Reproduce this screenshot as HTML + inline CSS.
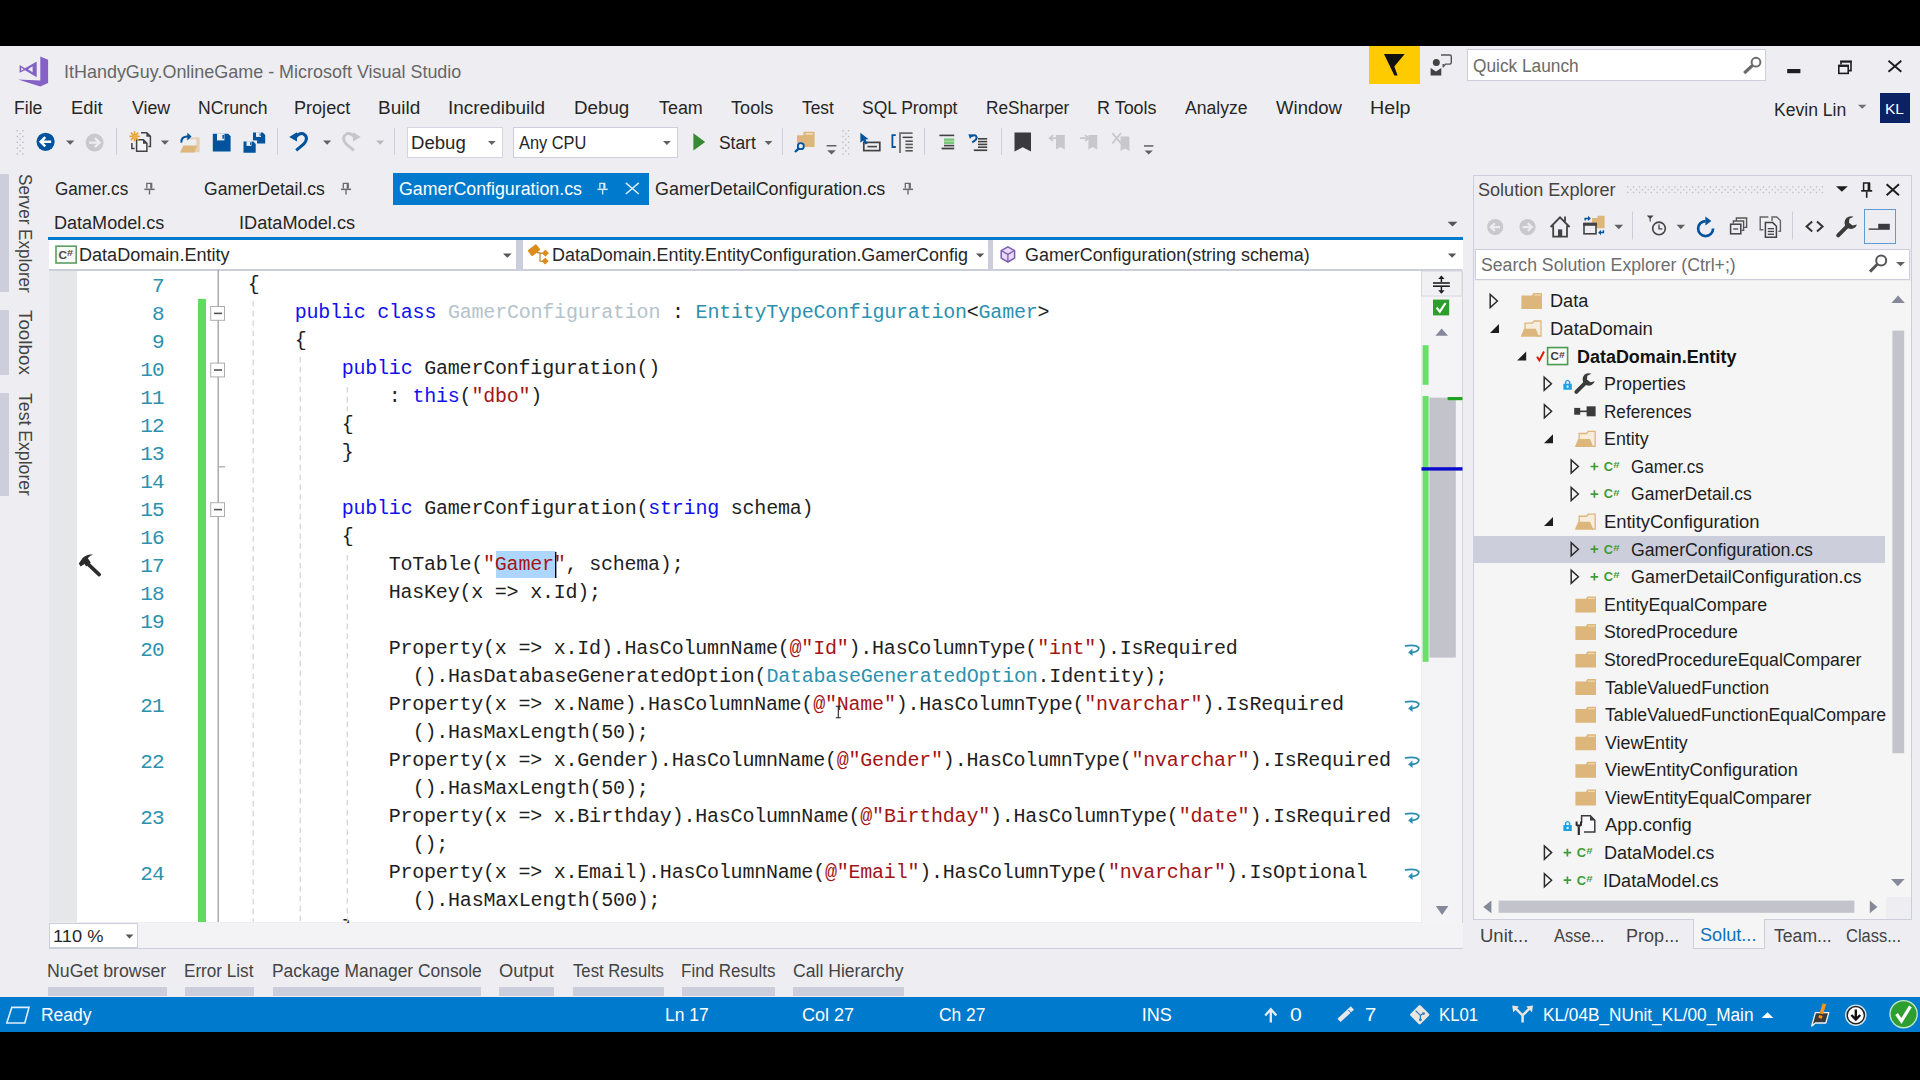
<!DOCTYPE html>
<html><head><meta charset="utf-8"><title>ItHandyGuy.OnlineGame - Microsoft Visual Studio</title>
<style>
html,body{margin:0;padding:0;background:#000;}
body{width:1920px;height:1080px;position:relative;overflow:hidden;font-family:"Liberation Sans",sans-serif;}
#app{position:absolute;left:0;top:0;width:1920px;height:1080px;overflow:hidden;}
#app div,#app svg{position:absolute;}
#app svg{overflow:visible;}
.t{white-space:pre;}
</style></head>
<body><div id="app">
<div style="left:0px;top:46px;width:1920px;height:986px;background:#EEEEF2;"></div>
<div class="t" style="left:64.31px;top:63.26px;font-family:'Liberation Sans', sans-serif;font-size:18.6px;line-height:18.6px;color:#666;font-weight:400;transform:scaleX(0.9652);transform-origin:0 0;">ItHandyGuy.OnlineGame - Microsoft Visual Studio</div>
<div class="t" style="left:13.83px;top:99.06px;font-family:'Liberation Sans', sans-serif;font-size:18px;line-height:18px;color:#262626;font-weight:400;transform:scaleX(0.9794);transform-origin:0 0;">File</div>
<div class="t" style="left:71.17px;top:99.06px;font-family:'Liberation Sans', sans-serif;font-size:18px;line-height:18px;color:#262626;font-weight:400;transform:scaleX(1.0169);transform-origin:0 0;">Edit</div>
<div class="t" style="left:132.05px;top:99.06px;font-family:'Liberation Sans', sans-serif;font-size:18px;line-height:18px;color:#262626;font-weight:400;transform:scaleX(0.9870);transform-origin:0 0;">View</div>
<div class="t" style="left:197.83px;top:99.06px;font-family:'Liberation Sans', sans-serif;font-size:18px;line-height:18px;color:#262626;font-weight:400;transform:scaleX(0.9773);transform-origin:0 0;">NCrunch</div>
<div class="t" style="left:293.79px;top:99.06px;font-family:'Liberation Sans', sans-serif;font-size:18px;line-height:18px;color:#262626;font-weight:400;transform:scaleX(1.0037);transform-origin:0 0;">Project</div>
<div class="t" style="left:378.42px;top:99.06px;font-family:'Liberation Sans', sans-serif;font-size:18px;line-height:18px;color:#262626;font-weight:400;transform:scaleX(1.0550);transform-origin:0 0;">Build</div>
<div class="t" style="left:448.16px;top:99.06px;font-family:'Liberation Sans', sans-serif;font-size:18px;line-height:18px;color:#262626;font-weight:400;transform:scaleX(1.0532);transform-origin:0 0;">Incredibuild</div>
<div class="t" style="left:574.14px;top:99.06px;font-family:'Liberation Sans', sans-serif;font-size:18px;line-height:18px;color:#262626;font-weight:400;transform:scaleX(1.0416);transform-origin:0 0;">Debug</div>
<div class="t" style="left:658.80px;top:99.06px;font-family:'Liberation Sans', sans-serif;font-size:18px;line-height:18px;color:#262626;font-weight:400;transform:scaleX(0.9941);transform-origin:0 0;">Team</div>
<div class="t" style="left:731.20px;top:99.06px;font-family:'Liberation Sans', sans-serif;font-size:18px;line-height:18px;color:#262626;font-weight:400;transform:scaleX(1.0061);transform-origin:0 0;">Tools</div>
<div class="t" style="left:802.22px;top:99.06px;font-family:'Liberation Sans', sans-serif;font-size:18px;line-height:18px;color:#262626;font-weight:400;transform:scaleX(0.9631);transform-origin:0 0;">Test</div>
<div class="t" style="left:861.97px;top:99.06px;font-family:'Liberation Sans', sans-serif;font-size:18px;line-height:18px;color:#262626;font-weight:400;transform:scaleX(0.9703);transform-origin:0 0;">SQL Prompt</div>
<div class="t" style="left:986.26px;top:99.06px;font-family:'Liberation Sans', sans-serif;font-size:18px;line-height:18px;color:#262626;font-weight:400;transform:scaleX(0.9572);transform-origin:0 0;">ReSharper</div>
<div class="t" style="left:1096.80px;top:99.06px;font-family:'Liberation Sans', sans-serif;font-size:18px;line-height:18px;color:#262626;font-weight:400;transform:scaleX(0.9983);transform-origin:0 0;">R Tools</div>
<div class="t" style="left:1185.00px;top:99.06px;font-family:'Liberation Sans', sans-serif;font-size:18px;line-height:18px;color:#262626;font-weight:400;transform:scaleX(0.9755);transform-origin:0 0;">Analyze</div>
<div class="t" style="left:1275.54px;top:99.06px;font-family:'Liberation Sans', sans-serif;font-size:18px;line-height:18px;color:#262626;font-weight:400;transform:scaleX(1.0306);transform-origin:0 0;">Window</div>
<div class="t" style="left:1370.36px;top:99.06px;font-family:'Liberation Sans', sans-serif;font-size:18px;line-height:18px;color:#262626;font-weight:400;transform:scaleX(1.0935);transform-origin:0 0;">Help</div>
<div style="left:1369px;top:46px;width:50.5px;height:38px;background:#FDCB00;"></div>
<div style="left:1466.5px;top:48.5px;width:299.5px;height:32.5px;background:#fff;border:1px solid #CCCEDB;box-sizing:border-box;"></div>
<div class="t" style="left:1473.28px;top:57.26px;font-family:'Liberation Sans', sans-serif;font-size:18px;line-height:18px;color:#6a6a6a;font-weight:400;transform:scaleX(0.9607);transform-origin:0 0;">Quick Launch</div>
<div class="t" style="left:1774.14px;top:101.26px;font-family:'Liberation Sans', sans-serif;font-size:18px;line-height:18px;color:#262626;font-weight:400;transform:scaleX(0.9762);transform-origin:0 0;">Kevin Lin</div>
<div style="left:1879.5px;top:92.5px;width:30.5px;height:30px;background:#0B2265;"></div>
<div class="t" style="left:1884.71px;top:100.80px;font-family:'Liberation Sans', sans-serif;font-size:15px;line-height:15px;color:#fff;font-weight:400;transform:scaleX(1.0303);transform-origin:0 0;">KL</div>
<div style="left:406.5px;top:126.5px;width:96px;height:31.5px;background:#fff;border:1px solid #D4D5E0;box-sizing:border-box;"></div>
<div style="left:512.5px;top:126.5px;width:165px;height:31.5px;background:#fff;border:1px solid #CCCEDB;box-sizing:border-box;"></div>
<div class="t" style="left:410.95px;top:133.96px;font-family:'Liberation Sans', sans-serif;font-size:18px;line-height:18px;color:#262626;font-weight:400;transform:scaleX(1.0317);transform-origin:0 0;">Debug</div>
<div class="t" style="left:518.80px;top:133.96px;font-family:'Liberation Sans', sans-serif;font-size:18px;line-height:18px;color:#262626;font-weight:400;transform:scaleX(0.9103);transform-origin:0 0;">Any CPU</div>
<div class="t" style="left:718.88px;top:133.96px;font-family:'Liberation Sans', sans-serif;font-size:18px;line-height:18px;color:#262626;font-weight:400;transform:scaleX(0.9664);transform-origin:0 0;">Start</div>
<div style="left:116.3px;top:128px;width:1px;height:27px;background:#CCCEDB;"></div>
<div style="left:276.7px;top:128px;width:1px;height:27px;background:#CCCEDB;"></div>
<div style="left:393.8px;top:128px;width:1px;height:27px;background:#CCCEDB;"></div>
<div style="left:782px;top:128px;width:1px;height:27px;background:#CCCEDB;"></div>
<div style="left:924.4px;top:128px;width:1px;height:27px;background:#CCCEDB;"></div>
<div style="left:1001px;top:128px;width:1px;height:27px;background:#CCCEDB;"></div>
<div style="left:0px;top:173.8px;width:9px;height:118.59999999999997px;background:#CCCEDB;"></div>
<div style="left:0px;top:310.3px;width:9px;height:64.69999999999999px;background:#CCCEDB;"></div>
<div style="left:0px;top:393px;width:9px;height:102.80000000000001px;background:#CCCEDB;"></div>
<div style="left:393.3px;top:173px;width:255.7px;height:32.3px;background:#007ACC;"></div>
<div class="t" style="left:54.55px;top:179.76px;font-family:'Liberation Sans', sans-serif;font-size:18px;line-height:18px;color:#262626;font-weight:400;transform:scaleX(0.9502);transform-origin:0 0;">Gamer.cs</div>
<div class="t" style="left:203.53px;top:179.76px;font-family:'Liberation Sans', sans-serif;font-size:18px;line-height:18px;color:#262626;font-weight:400;transform:scaleX(0.9735);transform-origin:0 0;">GamerDetail.cs</div>
<div class="t" style="left:398.61px;top:179.76px;font-family:'Liberation Sans', sans-serif;font-size:18px;line-height:18px;color:#fff;font-weight:400;transform:scaleX(0.9886);transform-origin:0 0;">GamerConfiguration.cs</div>
<div class="t" style="left:655.40px;top:179.76px;font-family:'Liberation Sans', sans-serif;font-size:18px;line-height:18px;color:#262626;font-weight:400;transform:scaleX(0.9961);transform-origin:0 0;">GamerDetailConfiguration.cs</div>
<div class="t" style="left:54.00px;top:213.51px;font-family:'Liberation Sans', sans-serif;font-size:18px;line-height:18px;color:#262626;font-weight:400;transform:scaleX(1.0023);transform-origin:0 0;">DataModel.cs</div>
<div class="t" style="left:239.48px;top:213.51px;font-family:'Liberation Sans', sans-serif;font-size:18px;line-height:18px;color:#262626;font-weight:400;transform:scaleX(1.0089);transform-origin:0 0;">IDataModel.cs</div>
<div style="left:48px;top:237px;width:1415px;height:2.5px;background:#007ACC;"></div>
<div style="left:49px;top:239.5px;width:1414px;height:30.5px;background:#fff;"></div>
<div style="left:516px;top:240px;width:6.5px;height:29px;background:#CCCEDB;"></div>
<div style="left:988px;top:240px;width:5px;height:29px;background:#CCCEDB;"></div>
<div class="t" style="left:79.49px;top:245.76px;font-family:'Liberation Sans', sans-serif;font-size:18px;line-height:18px;color:#262626;font-weight:400;transform:scaleX(1.0034);transform-origin:0 0;">DataDomain.Entity</div>
<div class="t" style="left:552.21px;top:245.76px;font-family:'Liberation Sans', sans-serif;font-size:18px;line-height:18px;color:#262626;font-weight:400;transform:scaleX(0.9953);transform-origin:0 0;">DataDomain.Entity.EntityConfiguration.GamerConfig</div>
<div class="t" style="left:1025.01px;top:245.76px;font-family:'Liberation Sans', sans-serif;font-size:18px;line-height:18px;color:#262626;font-weight:400;transform:scaleX(0.9947);transform-origin:0 0;">GamerConfiguration(string schema)</div>
<div style="left:49px;top:269.5px;width:1414px;height:1px;background:#CCCEDB;"></div>
<div style="left:49px;top:270px;width:1372px;height:652px;background:#fff;"></div>
<div style="left:49px;top:270px;width:28px;height:652px;background:#E6E7E8;"></div>
<div style="left:198px;top:299px;width:8px;height:623px;background:#5FDB5F;"></div>
<div style="left:1421.5px;top:270px;width:41px;height:653px;background:#F4F4F7;"></div>
<div style="left:1462.3px;top:270px;width:1px;height:678px;background:#D3D4E0;"></div>
<div style="left:49px;top:269.4px;width:1413px;height:1.8px;background:#CCCEDB;"></div>
<div style="left:495.5px;top:551px;width:60px;height:27px;background:#ADD6FF;"></div>
<div class="t" style="left:247.70px;top:274.97px;font-family:'Liberation Mono', monospace;font-size:20px;line-height:20px;letter-spacing:-0.212px"><span style="color:#1e1e1e">{</span></div>
<div class="t" style="left:152.11px;top:275.60px;font-family:'Liberation Mono', monospace;font-size:21px;line-height:21px;letter-spacing:-0.812px"><span style="color:#2B91AF">7</span></div>
<div class="t" style="left:294.70px;top:302.97px;font-family:'Liberation Mono', monospace;font-size:20px;line-height:20px;letter-spacing:-0.212px"><span style="color:#1010F0">public</span><span style="color:#1e1e1e"> </span><span style="color:#1010F0">class</span><span style="color:#1e1e1e"> </span><span style="color:#B4C3CC">GamerConfiguration</span><span style="color:#1e1e1e"> : </span><span style="color:#2B91AF">EntityTypeConfiguration</span><span style="color:#1e1e1e">&lt;</span><span style="color:#2B91AF">Gamer</span><span style="color:#1e1e1e">&gt;</span></div>
<div class="t" style="left:152.11px;top:303.60px;font-family:'Liberation Mono', monospace;font-size:21px;line-height:21px;letter-spacing:-0.812px"><span style="color:#2B91AF">8</span></div>
<div class="t" style="left:294.70px;top:330.97px;font-family:'Liberation Mono', monospace;font-size:20px;line-height:20px;letter-spacing:-0.212px"><span style="color:#1e1e1e">{</span></div>
<div class="t" style="left:152.11px;top:331.60px;font-family:'Liberation Mono', monospace;font-size:21px;line-height:21px;letter-spacing:-0.812px"><span style="color:#2B91AF">9</span></div>
<div class="t" style="left:341.70px;top:358.97px;font-family:'Liberation Mono', monospace;font-size:20px;line-height:20px;letter-spacing:-0.212px"><span style="color:#1010F0">public</span><span style="color:#1e1e1e"> GamerConfiguration()</span></div>
<div class="t" style="left:140.32px;top:359.60px;font-family:'Liberation Mono', monospace;font-size:21px;line-height:21px;letter-spacing:-0.812px"><span style="color:#2B91AF">10</span></div>
<div class="t" style="left:341.70px;top:386.97px;font-family:'Liberation Mono', monospace;font-size:20px;line-height:20px;letter-spacing:-0.212px"><span style="color:#1e1e1e">    : </span><span style="color:#1010F0">this</span><span style="color:#1e1e1e">(</span><span style="color:#A31515">&quot;dbo&quot;</span><span style="color:#1e1e1e">)</span></div>
<div class="t" style="left:140.32px;top:387.60px;font-family:'Liberation Mono', monospace;font-size:21px;line-height:21px;letter-spacing:-0.812px"><span style="color:#2B91AF">11</span></div>
<div class="t" style="left:341.70px;top:414.97px;font-family:'Liberation Mono', monospace;font-size:20px;line-height:20px;letter-spacing:-0.212px"><span style="color:#1e1e1e">{</span></div>
<div class="t" style="left:140.32px;top:415.60px;font-family:'Liberation Mono', monospace;font-size:21px;line-height:21px;letter-spacing:-0.812px"><span style="color:#2B91AF">12</span></div>
<div class="t" style="left:341.70px;top:442.97px;font-family:'Liberation Mono', monospace;font-size:20px;line-height:20px;letter-spacing:-0.212px"><span style="color:#1e1e1e">}</span></div>
<div class="t" style="left:140.32px;top:443.60px;font-family:'Liberation Mono', monospace;font-size:21px;line-height:21px;letter-spacing:-0.812px"><span style="color:#2B91AF">13</span></div>
<div class="t" style="left:140.32px;top:471.60px;font-family:'Liberation Mono', monospace;font-size:21px;line-height:21px;letter-spacing:-0.812px"><span style="color:#2B91AF">14</span></div>
<div class="t" style="left:341.70px;top:498.97px;font-family:'Liberation Mono', monospace;font-size:20px;line-height:20px;letter-spacing:-0.212px"><span style="color:#1010F0">public</span><span style="color:#1e1e1e"> GamerConfiguration(</span><span style="color:#1010F0">string</span><span style="color:#1e1e1e"> schema)</span></div>
<div class="t" style="left:140.32px;top:499.60px;font-family:'Liberation Mono', monospace;font-size:21px;line-height:21px;letter-spacing:-0.812px"><span style="color:#2B91AF">15</span></div>
<div class="t" style="left:341.70px;top:526.97px;font-family:'Liberation Mono', monospace;font-size:20px;line-height:20px;letter-spacing:-0.212px"><span style="color:#1e1e1e">{</span></div>
<div class="t" style="left:140.32px;top:527.60px;font-family:'Liberation Mono', monospace;font-size:21px;line-height:21px;letter-spacing:-0.812px"><span style="color:#2B91AF">16</span></div>
<div class="t" style="left:388.70px;top:554.97px;font-family:'Liberation Mono', monospace;font-size:20px;line-height:20px;letter-spacing:-0.212px"><span style="color:#1e1e1e">ToTable(</span><span style="color:#A31515">&quot;Gamer&quot;</span><span style="color:#1e1e1e">, schema);</span></div>
<div class="t" style="left:140.32px;top:555.60px;font-family:'Liberation Mono', monospace;font-size:21px;line-height:21px;letter-spacing:-0.812px"><span style="color:#2B91AF">17</span></div>
<div class="t" style="left:388.70px;top:582.97px;font-family:'Liberation Mono', monospace;font-size:20px;line-height:20px;letter-spacing:-0.212px"><span style="color:#1e1e1e">HasKey(x =&gt; x.Id);</span></div>
<div class="t" style="left:140.32px;top:583.60px;font-family:'Liberation Mono', monospace;font-size:21px;line-height:21px;letter-spacing:-0.812px"><span style="color:#2B91AF">18</span></div>
<div class="t" style="left:140.32px;top:611.60px;font-family:'Liberation Mono', monospace;font-size:21px;line-height:21px;letter-spacing:-0.812px"><span style="color:#2B91AF">19</span></div>
<div class="t" style="left:388.70px;top:638.97px;font-family:'Liberation Mono', monospace;font-size:20px;line-height:20px;letter-spacing:-0.212px"><span style="color:#1e1e1e">Property(x =&gt; x.Id).HasColumnName(</span><span style="color:#A31515">@&quot;Id&quot;</span><span style="color:#1e1e1e">).HasColumnType(</span><span style="color:#A31515">&quot;int&quot;</span><span style="color:#1e1e1e">).IsRequired</span></div>
<div class="t" style="left:140.32px;top:639.60px;font-family:'Liberation Mono', monospace;font-size:21px;line-height:21px;letter-spacing:-0.812px"><span style="color:#2B91AF">20</span></div>
<div class="t" style="left:412.70px;top:666.97px;font-family:'Liberation Mono', monospace;font-size:20px;line-height:20px;letter-spacing:-0.212px"><span style="color:#1e1e1e">().HasDatabaseGeneratedOption(</span><span style="color:#2B91AF">DatabaseGeneratedOption</span><span style="color:#1e1e1e">.Identity);</span></div>
<div class="t" style="left:388.70px;top:694.97px;font-family:'Liberation Mono', monospace;font-size:20px;line-height:20px;letter-spacing:-0.212px"><span style="color:#1e1e1e">Property(x =&gt; x.Name).HasColumnName(</span><span style="color:#A31515">@&quot;Name&quot;</span><span style="color:#1e1e1e">).HasColumnType(</span><span style="color:#A31515">&quot;nvarchar&quot;</span><span style="color:#1e1e1e">).IsRequired</span></div>
<div class="t" style="left:140.32px;top:695.60px;font-family:'Liberation Mono', monospace;font-size:21px;line-height:21px;letter-spacing:-0.812px"><span style="color:#2B91AF">21</span></div>
<div class="t" style="left:412.70px;top:722.97px;font-family:'Liberation Mono', monospace;font-size:20px;line-height:20px;letter-spacing:-0.212px"><span style="color:#1e1e1e">().HasMaxLength(50);</span></div>
<div class="t" style="left:388.70px;top:750.97px;font-family:'Liberation Mono', monospace;font-size:20px;line-height:20px;letter-spacing:-0.212px"><span style="color:#1e1e1e">Property(x =&gt; x.Gender).HasColumnName(</span><span style="color:#A31515">@&quot;Gender&quot;</span><span style="color:#1e1e1e">).HasColumnType(</span><span style="color:#A31515">&quot;nvarchar&quot;</span><span style="color:#1e1e1e">).IsRequired</span></div>
<div class="t" style="left:140.32px;top:751.60px;font-family:'Liberation Mono', monospace;font-size:21px;line-height:21px;letter-spacing:-0.812px"><span style="color:#2B91AF">22</span></div>
<div class="t" style="left:412.70px;top:778.97px;font-family:'Liberation Mono', monospace;font-size:20px;line-height:20px;letter-spacing:-0.212px"><span style="color:#1e1e1e">().HasMaxLength(50);</span></div>
<div class="t" style="left:388.70px;top:806.97px;font-family:'Liberation Mono', monospace;font-size:20px;line-height:20px;letter-spacing:-0.212px"><span style="color:#1e1e1e">Property(x =&gt; x.Birthday).HasColumnName(</span><span style="color:#A31515">@&quot;Birthday&quot;</span><span style="color:#1e1e1e">).HasColumnType(</span><span style="color:#A31515">&quot;date&quot;</span><span style="color:#1e1e1e">).IsRequired</span></div>
<div class="t" style="left:140.32px;top:807.60px;font-family:'Liberation Mono', monospace;font-size:21px;line-height:21px;letter-spacing:-0.812px"><span style="color:#2B91AF">23</span></div>
<div class="t" style="left:412.70px;top:834.97px;font-family:'Liberation Mono', monospace;font-size:20px;line-height:20px;letter-spacing:-0.212px"><span style="color:#1e1e1e">();</span></div>
<div class="t" style="left:388.70px;top:862.97px;font-family:'Liberation Mono', monospace;font-size:20px;line-height:20px;letter-spacing:-0.212px"><span style="color:#1e1e1e">Property(x =&gt; x.Email).HasColumnName(</span><span style="color:#A31515">@&quot;Email&quot;</span><span style="color:#1e1e1e">).HasColumnType(</span><span style="color:#A31515">&quot;nvarchar&quot;</span><span style="color:#1e1e1e">).IsOptional</span></div>
<div class="t" style="left:140.32px;top:863.60px;font-family:'Liberation Mono', monospace;font-size:21px;line-height:21px;letter-spacing:-0.812px"><span style="color:#2B91AF">24</span></div>
<div class="t" style="left:412.70px;top:890.97px;font-family:'Liberation Mono', monospace;font-size:20px;line-height:20px;letter-spacing:-0.212px"><span style="color:#1e1e1e">().HasMaxLength(500);</span></div>
<div class="t" style="left:341.70px;top:918.97px;font-family:'Liberation Mono', monospace;font-size:20px;line-height:20px;letter-spacing:-0.212px"><span style="color:#1e1e1e">}</span></div>
<div style="left:49px;top:922.5px;width:1413.5px;height:25.5px;background:#F3F3F6;"></div>
<div style="left:49px;top:923px;width:89px;height:25px;background:#fff;border:1px solid #CCCEDB;box-sizing:border-box;"></div>
<div class="t" style="left:52.56px;top:927.61px;font-family:'Liberation Sans', sans-serif;font-size:17px;line-height:17px;color:#262626;font-weight:400;transform:scaleX(1.0733);transform-origin:0 0;">110 %</div>
<div style="left:49px;top:947.5px;width:1414px;height:1px;background:#CCCEDB;"></div>
<div class="t" style="left:47.02px;top:961.76px;font-family:'Liberation Sans', sans-serif;font-size:18px;line-height:18px;color:#444;font-weight:400;transform:scaleX(0.9853);transform-origin:0 0;">NuGet browser</div>
<div style="left:48px;top:986.8px;width:118.5px;height:9.6px;background:#CCCEDB;"></div>
<div class="t" style="left:184.07px;top:961.76px;font-family:'Liberation Sans', sans-serif;font-size:18px;line-height:18px;color:#444;font-weight:400;transform:scaleX(0.9510);transform-origin:0 0;">Error List</div>
<div style="left:185px;top:986.8px;width:69px;height:9.6px;background:#CCCEDB;"></div>
<div class="t" style="left:271.55px;top:961.76px;font-family:'Liberation Sans', sans-serif;font-size:18px;line-height:18px;color:#444;font-weight:400;transform:scaleX(0.9662);transform-origin:0 0;">Package Manager Console</div>
<div style="left:272.5px;top:986.8px;width:208.5px;height:9.6px;background:#CCCEDB;"></div>
<div class="t" style="left:498.74px;top:961.76px;font-family:'Liberation Sans', sans-serif;font-size:18px;line-height:18px;color:#444;font-weight:400;transform:scaleX(1.0141);transform-origin:0 0;">Output</div>
<div style="left:499px;top:986.8px;width:55px;height:9.6px;background:#CCCEDB;"></div>
<div class="t" style="left:572.54px;top:961.76px;font-family:'Liberation Sans', sans-serif;font-size:18px;line-height:18px;color:#444;font-weight:400;transform:scaleX(0.9278);transform-origin:0 0;">Test Results</div>
<div style="left:572.5px;top:986.8px;width:91.0px;height:9.6px;background:#CCCEDB;"></div>
<div class="t" style="left:680.58px;top:961.76px;font-family:'Liberation Sans', sans-serif;font-size:18px;line-height:18px;color:#444;font-weight:400;transform:scaleX(0.9439);transform-origin:0 0;">Find Results</div>
<div style="left:681.5px;top:986.8px;width:93.5px;height:9.6px;background:#CCCEDB;"></div>
<div class="t" style="left:792.52px;top:961.76px;font-family:'Liberation Sans', sans-serif;font-size:18px;line-height:18px;color:#444;font-weight:400;transform:scaleX(0.9777);transform-origin:0 0;">Call Hierarchy</div>
<div style="left:793px;top:986.8px;width:110.5px;height:9.6px;background:#CCCEDB;"></div>
<div style="left:0px;top:997px;width:1920px;height:35px;background:#007ACC;"></div>
<div class="t" style="left:40.54px;top:1005.76px;font-family:'Liberation Sans', sans-serif;font-size:18px;line-height:18px;color:#fff;font-weight:400;transform:scaleX(0.9703);transform-origin:0 0;">Ready</div>
<div class="t" style="left:664.54px;top:1005.76px;font-family:'Liberation Sans', sans-serif;font-size:18px;line-height:18px;color:#fff;font-weight:400;transform:scaleX(0.9708);transform-origin:0 0;">Ln 17</div>
<div class="t" style="left:802.00px;top:1005.76px;font-family:'Liberation Sans', sans-serif;font-size:18px;line-height:18px;color:#fff;font-weight:400;transform:scaleX(1.0000);transform-origin:0 0;">Col 27</div>
<div class="t" style="left:938.53px;top:1005.76px;font-family:'Liberation Sans', sans-serif;font-size:18px;line-height:18px;color:#fff;font-weight:400;transform:scaleX(0.9674);transform-origin:0 0;">Ch 27</div>
<div class="t" style="left:1141.75px;top:1005.76px;font-family:'Liberation Sans', sans-serif;font-size:18px;line-height:18px;color:#fff;font-weight:400;transform:scaleX(1.0000);transform-origin:0 0;">INS</div>
<div class="t" style="left:1290.12px;top:1005.76px;font-family:'Liberation Sans', sans-serif;font-size:18px;line-height:18px;color:#fff;font-weight:400;transform:scaleX(1.1765);transform-origin:0 0;">0</div>
<div class="t" style="left:1364.88px;top:1005.76px;font-family:'Liberation Sans', sans-serif;font-size:18px;line-height:18px;color:#fff;font-weight:400;transform:scaleX(1.1250);transform-origin:0 0;">7</div>
<div class="t" style="left:1439.10px;top:1005.76px;font-family:'Liberation Sans', sans-serif;font-size:18px;line-height:18px;color:#fff;font-weight:400;transform:scaleX(0.9308);transform-origin:0 0;">KL01</div>
<div class="t" style="left:1542.57px;top:1005.76px;font-family:'Liberation Sans', sans-serif;font-size:18px;line-height:18px;color:#fff;font-weight:400;transform:scaleX(0.9563);transform-origin:0 0;">KL/04B_NUnit_KL/00_Main</div>
<div style="left:0px;top:1032px;width:1920px;height:48px;background:#000;"></div>
<div style="left:1473px;top:174.5px;width:438.5px;height:745px;background:#EEEEF2;border:1px solid #CCCEDB;box-sizing:border-box;"></div>
<div class="t" style="left:1478.25px;top:181.26px;font-family:'Liberation Sans', sans-serif;font-size:18px;line-height:18px;color:#444;font-weight:400;transform:scaleX(1.0037);transform-origin:0 0;">Solution Explorer</div>
<div style="left:1474.5px;top:248.5px;width:435.5px;height:31px;background:#fff;border:1px solid #CCCEDB;box-sizing:border-box;"></div>
<div class="t" style="left:1480.66px;top:256.16px;font-family:'Liberation Sans', sans-serif;font-size:18px;line-height:18px;color:#6d6d6d;font-weight:400;transform:scaleX(0.9812);transform-origin:0 0;">Search Solution Explorer (Ctrl+;)</div>
<div style="left:1474px;top:281px;width:412px;height:616px;background:#F5F5F5;"></div>
<div style="left:1886px;top:281px;width:25px;height:616px;background:#F5F5F5;"></div>
<div style="left:1474px;top:897px;width:412px;height:22px;background:#F5F5F5;"></div>
<div style="left:1474px;top:535.5px;width:411px;height:27px;background:#CCCEDB;"></div>
<div style="left:1864.2px;top:209px;width:31.6px;height:34.6px;background:#EEEEF2;border:1.2px solid #5A9BD8;box-sizing:border-box;"></div>
<div class="t" style="left:1550.29px;top:292.16px;font-family:'Liberation Sans', sans-serif;font-size:18px;line-height:18px;color:#1e1e1e;font-weight:400;transform:scaleX(1.0082);transform-origin:0 0;">Data</div>
<div class="t" style="left:1550.26px;top:319.74px;font-family:'Liberation Sans', sans-serif;font-size:18px;line-height:18px;color:#1e1e1e;font-weight:400;transform:scaleX(1.0277);transform-origin:0 0;">DataDomain</div>
<div class="t" style="left:1576.55px;top:348.32px;font-family:'Liberation Sans', sans-serif;font-size:18px;line-height:18px;color:#111;font-weight:700;transform:scaleX(0.9965);transform-origin:0 0;">DataDomain.Entity</div>
<div class="t" style="left:1603.81px;top:374.90px;font-family:'Liberation Sans', sans-serif;font-size:18px;line-height:18px;color:#1e1e1e;font-weight:400;transform:scaleX(0.9963);transform-origin:0 0;">Properties</div>
<div class="t" style="left:1603.77px;top:403.48px;font-family:'Liberation Sans', sans-serif;font-size:18px;line-height:18px;color:#1e1e1e;font-weight:400;transform:scaleX(0.9511);transform-origin:0 0;">References</div>
<div class="t" style="left:1603.71px;top:430.06px;font-family:'Liberation Sans', sans-serif;font-size:18px;line-height:18px;color:#1e1e1e;font-weight:400;transform:scaleX(0.9908);transform-origin:0 0;">Entity</div>
<div class="t" style="left:1630.65px;top:457.64px;font-family:'Liberation Sans', sans-serif;font-size:18px;line-height:18px;color:#1e1e1e;font-weight:400;transform:scaleX(0.9462);transform-origin:0 0;">Gamer.cs</div>
<div class="t" style="left:1630.63px;top:485.22px;font-family:'Liberation Sans', sans-serif;font-size:18px;line-height:18px;color:#1e1e1e;font-weight:400;transform:scaleX(0.9747);transform-origin:0 0;">GamerDetail.cs</div>
<div class="t" style="left:1603.67px;top:512.80px;font-family:'Liberation Sans', sans-serif;font-size:18px;line-height:18px;color:#1e1e1e;font-weight:400;transform:scaleX(1.0221);transform-origin:0 0;">EntityConfiguration</div>
<div class="t" style="left:1630.62px;top:541.38px;font-family:'Liberation Sans', sans-serif;font-size:18px;line-height:18px;color:#1e1e1e;font-weight:400;transform:scaleX(0.9831);transform-origin:0 0;">GamerConfiguration.cs</div>
<div class="t" style="left:1630.60px;top:567.96px;font-family:'Liberation Sans', sans-serif;font-size:18px;line-height:18px;color:#1e1e1e;font-weight:400;transform:scaleX(0.9974);transform-origin:0 0;">GamerDetailConfiguration.cs</div>
<div class="t" style="left:1603.72px;top:595.54px;font-family:'Liberation Sans', sans-serif;font-size:18px;line-height:18px;color:#1e1e1e;font-weight:400;transform:scaleX(0.9880);transform-origin:0 0;">EntityEqualCompare</div>
<div class="t" style="left:1604.46px;top:623.12px;font-family:'Liberation Sans', sans-serif;font-size:18px;line-height:18px;color:#1e1e1e;font-weight:400;transform:scaleX(0.9836);transform-origin:0 0;">StoredProcedure</div>
<div class="t" style="left:1604.46px;top:650.70px;font-family:'Liberation Sans', sans-serif;font-size:18px;line-height:18px;color:#1e1e1e;font-weight:400;transform:scaleX(0.9820);transform-origin:0 0;">StoredProcedureEqualComparer</div>
<div class="t" style="left:1604.71px;top:679.28px;font-family:'Liberation Sans', sans-serif;font-size:18px;line-height:18px;color:#1e1e1e;font-weight:400;transform:scaleX(0.9836);transform-origin:0 0;">TableValuedFunction</div>
<div class="t" style="left:1604.71px;top:705.86px;font-family:'Liberation Sans', sans-serif;font-size:18px;line-height:18px;color:#1e1e1e;font-weight:400;transform:scaleX(0.9800);transform-origin:0 0;">TableValuedFunctionEqualCompare</div>
<div class="t" style="left:1604.95px;top:734.44px;font-family:'Liberation Sans', sans-serif;font-size:18px;line-height:18px;color:#1e1e1e;font-weight:400;transform:scaleX(0.9886);transform-origin:0 0;">ViewEntity</div>
<div class="t" style="left:1604.95px;top:761.02px;font-family:'Liberation Sans', sans-serif;font-size:18px;line-height:18px;color:#1e1e1e;font-weight:400;transform:scaleX(1.0108);transform-origin:0 0;">ViewEntityConfiguration</div>
<div class="t" style="left:1604.95px;top:788.60px;font-family:'Liberation Sans', sans-serif;font-size:18px;line-height:18px;color:#1e1e1e;font-weight:400;transform:scaleX(0.9835);transform-origin:0 0;">ViewEntityEqualComparer</div>
<div class="t" style="left:1605.20px;top:816.18px;font-family:'Liberation Sans', sans-serif;font-size:18px;line-height:18px;color:#1e1e1e;font-weight:400;transform:scaleX(1.0190);transform-origin:0 0;">App.config</div>
<div class="t" style="left:1603.70px;top:843.76px;font-family:'Liberation Sans', sans-serif;font-size:18px;line-height:18px;color:#1e1e1e;font-weight:400;transform:scaleX(1.0028);transform-origin:0 0;">DataModel.cs</div>
<div class="t" style="left:1603.44px;top:872.34px;font-family:'Liberation Sans', sans-serif;font-size:18px;line-height:18px;color:#1e1e1e;font-weight:400;transform:scaleX(1.0049);transform-origin:0 0;">IDataModel.cs</div>
<div style="left:1692.5px;top:918.5px;width:72.5px;height:30px;background:#F5F5F5;border:1px solid #CCCEDB;border-top:none;box-sizing:border-box;"></div>
<div class="t" style="left:1479.66px;top:927.06px;font-family:'Liberation Sans', sans-serif;font-size:18px;line-height:18px;color:#444;font-weight:400;transform:scaleX(1.0286);transform-origin:0 0;">Unit...</div>
<div class="t" style="left:1554.40px;top:927.06px;font-family:'Liberation Sans', sans-serif;font-size:18px;line-height:18px;color:#444;font-weight:400;transform:scaleX(0.9146);transform-origin:0 0;">Asse...</div>
<div class="t" style="left:1626.00px;top:927.06px;font-family:'Liberation Sans', sans-serif;font-size:18px;line-height:18px;color:#444;font-weight:400;transform:scaleX(1.0030);transform-origin:0 0;">Prop...</div>
<div class="t" style="left:1700.04px;top:926.06px;font-family:'Liberation Sans', sans-serif;font-size:18px;line-height:18px;color:#0E70C0;font-weight:400;transform:scaleX(1.0075);transform-origin:0 0;">Solut...</div>
<div class="t" style="left:1773.71px;top:927.06px;font-family:'Liberation Sans', sans-serif;font-size:18px;line-height:18px;color:#444;font-weight:400;transform:scaleX(0.9780);transform-origin:0 0;">Team...</div>
<div class="t" style="left:1845.88px;top:927.06px;font-family:'Liberation Sans', sans-serif;font-size:18px;line-height:18px;color:#444;font-weight:400;transform:scaleX(0.9170);transform-origin:0 0;">Class...</div>
<div class="t" style="left:34.44px;top:173.89px;font-family:'Liberation Sans', sans-serif;font-size:18px;line-height:18px;color:#444;font-weight:400;transform:rotate(90deg) scaleX(0.9500);transform-origin:0 0;">Server Explorer</div>
<div class="t" style="left:34.44px;top:310.48px;font-family:'Liberation Sans', sans-serif;font-size:18px;line-height:18px;color:#444;font-weight:400;transform:rotate(90deg) scaleX(1.0449);transform-origin:0 0;">Toolbox</div>
<div class="t" style="left:34.44px;top:393.11px;font-family:'Liberation Sans', sans-serif;font-size:18px;line-height:18px;color:#444;font-weight:400;transform:rotate(90deg) scaleX(0.9803);transform-origin:0 0;">Test Explorer</div>
<svg style="left:0;top:0" width="1920" height="1080" viewBox="0 0 1920 1080"><path d="M40.3,56.4 L48.1,59.8 L48.1,83 L40.3,86.5 L18.1,79.4 L40.3,80.6 Z" fill="#8661C5"/>
<path fill-rule="evenodd" d="M19.6,65.1 L19.6,72.8 L25,70.2 L36.7,77.3 L36.7,61.4 L25,68.2 Z M21.3,67.6 L21.3,70.9 L23.6,69.3 Z M28,69.2 L32.6,66.2 L32.6,72.3 Z" fill="#8661C5"/>
<path d="M1384,54.1 L1404.7,54.1 L1394.3,66.4 L1397.6,75.4 L1394.4,75.4 Z" fill="#111"/>
<circle cx="1436.3" cy="62.4" r="3.5" fill="#424242"/>
<path d="M1430.6,68 L1436,71.6 L1441.3,68 L1441.3,75.4 L1430.6,75.4 Z" fill="#424242"/>
<path d="M1441,55 L1449.8,55 Q1451.3,55 1451.3,56.5 L1451.3,62.6 Q1451.3,64.1 1449.8,64.1 L1445.5,64.1 L1443.2,66.8 L1443.2,64.1" fill="none" stroke="#555" stroke-width="1.4" stroke-linejoin="round"/>
<circle cx="1756" cy="62.2" r="4.4" fill="none" stroke="#6b6b6b" stroke-width="2.0"/>
<path d="M1752.4,65.5 L1744.2,73.2" stroke="#6b6b6b" stroke-width="3.2" stroke-linecap="butt"/>
<rect x="1787.2" y="69" width="13.2" height="4.2" fill="#1e1e1e"/>
<path d="M1841,64.5 L1841,61.6 L1851,61.6 L1851,70.6 L1848.8,70.6" fill="none" stroke="#1e1e1e" stroke-width="1.6"/>
<rect x="1838.8" y="66" width="9.4" height="7.4" fill="none" stroke="#1e1e1e" stroke-width="1.6"/>
<rect x="1838" y="64.6" width="11" height="2.2" fill="#1e1e1e"/>
<rect x="1840.2" y="60.6" width="11.6" height="1.8" fill="#1e1e1e"/>
<path d="M1888.5,60.8 L1901.3,71.8 M1901.3,60.8 L1888.5,71.8" stroke="#1e1e1e" stroke-width="1.9"/>
<path d="M1857.9,104.8 L1866.5,104.8 L1862.2,108.8 Z" fill="#717171"/>
<g fill="#B8BAC6"><rect x="16.6" y="130.0" width="1.4" height="1.4"/><rect x="22.200000000000003" y="130.0" width="1.4" height="1.4"/><rect x="19.400000000000002" y="132.9" width="1.4" height="1.4"/><rect x="16.6" y="135.8" width="1.4" height="1.4"/><rect x="22.200000000000003" y="135.8" width="1.4" height="1.4"/><rect x="19.400000000000002" y="138.7" width="1.4" height="1.4"/><rect x="16.6" y="141.6" width="1.4" height="1.4"/><rect x="22.200000000000003" y="141.6" width="1.4" height="1.4"/><rect x="19.400000000000002" y="144.5" width="1.4" height="1.4"/><rect x="16.6" y="147.4" width="1.4" height="1.4"/><rect x="22.200000000000003" y="147.4" width="1.4" height="1.4"/><rect x="19.400000000000002" y="150.3" width="1.4" height="1.4"/><rect x="16.6" y="153.2" width="1.4" height="1.4"/><rect x="22.200000000000003" y="153.2" width="1.4" height="1.4"/></g>
<g fill="#B8BAC6"><rect x="842.3" y="130.0" width="1.4" height="1.4"/><rect x="847.9" y="130.0" width="1.4" height="1.4"/><rect x="845.0999999999999" y="132.9" width="1.4" height="1.4"/><rect x="842.3" y="135.8" width="1.4" height="1.4"/><rect x="847.9" y="135.8" width="1.4" height="1.4"/><rect x="845.0999999999999" y="138.7" width="1.4" height="1.4"/><rect x="842.3" y="141.6" width="1.4" height="1.4"/><rect x="847.9" y="141.6" width="1.4" height="1.4"/><rect x="845.0999999999999" y="144.5" width="1.4" height="1.4"/><rect x="842.3" y="147.4" width="1.4" height="1.4"/><rect x="847.9" y="147.4" width="1.4" height="1.4"/><rect x="845.0999999999999" y="150.3" width="1.4" height="1.4"/><rect x="842.3" y="153.2" width="1.4" height="1.4"/><rect x="847.9" y="153.2" width="1.4" height="1.4"/></g>
<circle cx="45.6" cy="141.8" r="9.1" fill="#00539C"/>
<path d="M51.2,141.8 L41.5,141.8 M45.3,137.2 L40.6,141.8 L45.3,146.4" fill="none" stroke="#fff" stroke-width="2.4"/>
<path d="M66,140.6 L74.4,140.6 L70.2,144.8 Z" fill="#616161"/>
<circle cx="94.6" cy="142.6" r="9" fill="#C9C9CC"/>
<path d="M89,142.6 L98.7,142.6 M94.9,138 L99.6,142.6 L94.9,147.2" fill="none" stroke="#EDEDF0" stroke-width="2.4"/>
<path d="M141,132.8 L146.8,132.8 L150.4,136.4 L150.4,146.5 L148.4,146.5" fill="none" stroke="#424242" stroke-width="1.5"/>
<path d="M146.4,132.4 L150.8,136.8 L146.4,136.8 Z" fill="#424242"/>
<path d="M136.6,139.8 L143.4,139.8 L146.9,143.3 L146.9,151.3 L136.6,151.3 Z" fill="#F5F5F8" stroke="#424242" stroke-width="1.5"/>
<path d="M143,139.4 L147.3,143.7 L143,143.7 Z" fill="#424242"/>
<path d="M131.9,143 L131.9,148.4 L134.6,148.4" fill="none" stroke="#424242" stroke-width="1.5"/>
<path d="M129.40,136.40 L139.80,136.40 M130.92,132.72 L138.28,140.08 M134.60,131.20 L134.60,141.60 M138.28,132.72 L130.92,140.08" stroke="#E8A33D" stroke-width="1.7"/>
<circle cx="134.6" cy="136.4" r="2" fill="#F0B04A"/>
<path d="M160.9,140.6 L169,140.6 L164.95,144.8 Z" fill="#616161"/>
<path d="M186,137.4 L199.6,137.4 L199.6,152.2 L181,152.2 L184,146.2 L196.4,146.2 L196.4,139.2 L186,139.2 Z" fill="#DCB67A" opacity="0.55"/>
<path d="M180,152.4 L183.4,145.6 L197.2,145.6 L194.2,152.4 Z" fill="#DCB67A"/>
<path d="M181.4,142.6 Q181,137.2 186.6,136.6 L189.4,136.6" fill="none" stroke="#00539C" stroke-width="2"/>
<path d="M187.4,132.8 L191.6,136.6 L187.4,140.4 Z" fill="#00539C"/>
<path d="M212.8,133.8 L228.20000000000002,133.8 L230.60000000000002,136.20000000000002 L230.60000000000002,151.60000000000002 L212.8,151.60000000000002 Z" fill="#00539C"/>
<rect x="217.0" y="133.5" width="7.4" height="6.9" fill="#EEEEF2"/>
<rect x="222.4" y="134.9" width="1.5" height="3.8" fill="#00539C"/>
<path d="M253,132.6 L262.8,132.6 L265.2,135.0 L265.2,143.6 L253,143.6 Z" fill="#00539C"/>
<rect x="256" y="132.29999999999998" width="5" height="4.6" fill="#EEEEF2"/>
<rect x="259.6" y="133.4" width="1.1" height="2.5" fill="#00539C"/>
<rect x="242.3" y="140.4" width="14.8" height="13.6" fill="#EEEEF2"/>
<path d="M243.5,141.6 L253.29999999999998,141.6 L255.7,144.0 L255.7,152.79999999999998 L243.5,152.79999999999998 Z" fill="#00539C"/>
<rect x="246.5" y="141.29999999999998" width="5" height="4.6" fill="#EEEEF2"/>
<rect x="250.1" y="142.4" width="1.1" height="2.5" fill="#00539C"/>
<path d="M295.6,137 Q299,132.8 303,133.6 Q309.6,137.4 303.6,144.2 L296.2,150.4" fill="none" stroke="#00539C" stroke-width="3"/>
<path d="M289.2,137 L297,132.2 L297,141.6 Z" fill="#00539C"/>
<path d="M323.1,140.6 L331.2,140.6 L327.15,144.8 Z" fill="#616161"/>
<path d="M354.4,137 Q351,132.8 347,133.6 Q340.4,137.4 346.4,144.2 L353.8,150.4" fill="none" stroke="#C6C6CA" stroke-width="2.8"/>
<path d="M360.8,137 L353,132.2 L353,141.6 Z" fill="#C6C6CA"/>
<path d="M376,140.6 L384.2,140.6 L380.1,144.8 Z" fill="#B9B9BD"/>
<path d="M488,141 L495.6,141 L491.8,145 Z" fill="#616161"/>
<path d="M663,141 L670.8,141 L666.9,145 Z" fill="#616161"/>
<path d="M693.4,133.2 L705.2,141.9 L693.4,150.6 Z" fill="#388A34"/>
<path d="M764.6,141 L772.4,141 L768.5,145 Z" fill="#616161"/>
<path d="M797,135.2 L803.4,135.2 L803.4,131.8 L814.6,131.8 L814.6,147 L803,147 L797,143 Z" fill="#DCB67A"/>
<rect x="805.6" y="133.2" width="7.2" height="1.4" fill="#F3E3C4"/>
<circle cx="800.8" cy="146.2" r="3" fill="#EEEEF2" stroke="#00539C" stroke-width="1.8"/>
<path d="M798.6,148.6 L795,152" stroke="#00539C" stroke-width="2.4"/>
<rect x="826.6" y="145" width="9.799999999999955" height="1.5" fill="#616161"/>
<path d="M827.2,150.2 L835.8,150.2 L831.5,154.4 Z" fill="#616161"/>
<rect x="1144" y="145.2" width="9.400000000000091" height="1.5" fill="#616161"/>
<path d="M1144.6,150.4 L1152.8000000000002,150.4 L1148.7,154.6 Z" fill="#616161"/>
<rect x="863.8" y="142.4" width="16" height="8.2" fill="none" stroke="#424242" stroke-width="1.7"/>
<rect x="867.4" y="145.8" width="9.6" height="1.6" fill="#424242"/>
<path d="M860.4,132.8 L860.4,142.8 L863.2,140.4 L865.6,144.6 L867.6,143.4 L865.4,139.4 L868.6,139.2 Z" fill="#00539C"/>
<path d="M895.8,135.2 L892.4,135.2 L892.4,147 L895.8,147" fill="none" stroke="#00539C" stroke-width="1.8"/>
<path d="M900,153 L900,133.2 L912.6,133.2" fill="none" stroke="#6a6a6a" stroke-width="1.7"/>
<rect x="902.6" y="136.6" width="10" height="1.5" fill="#424242"/>
<rect x="905.4" y="140.4" width="7.4" height="1.6" fill="#555"/>
<rect x="905.4" y="143.6" width="7.4" height="1.6" fill="#555"/>
<rect x="905.4" y="146.8" width="7.4" height="1.6" fill="#555"/>
<rect x="905.4" y="150" width="7.4" height="1.6" fill="#555"/>
<rect x="939.4" y="134.6" width="14.8" height="1.6" fill="#424242"/>
<rect x="944" y="138.4" width="10.2" height="5.6" fill="#7CC57C"/>
<rect x="944" y="140.7" width="10.2" height="1" fill="#B5E0B5"/>
<rect x="944" y="144.8" width="10.2" height="1.6" fill="#424242"/>
<rect x="941.6" y="147.6" width="12.6" height="1.8" fill="#424242"/>
<path d="M971.2,136.4 Q975.6,133.6 976.6,137.2 Q977,140 972.2,142.4" fill="none" stroke="#00539C" stroke-width="2"/>
<path d="M968.4,134.2 L973.2,134.6 L970,139 Z" fill="#00539C"/>
<rect x="978" y="138" width="9.2" height="1.6" fill="#424242"/>
<rect x="978" y="140.8" width="9.2" height="1.6" fill="#424242"/>
<rect x="978" y="143.6" width="9.2" height="1.6" fill="#424242"/>
<rect x="978" y="146.4" width="9.2" height="1.6" fill="#424242"/>
<rect x="973.8" y="149.4" width="13.4" height="1.7" fill="#424242"/>
<path d="M1014.5,132.4 L1031,132.4 L1031,151.6 L1022.7,147.3 L1014.5,151.6 Z" fill="#3B3B3F"/>
<path d="M1056,135 L1064.8,135 L1064.8,149.4 L1060.4,147.0 L1056,149.4 Z" fill="#C8C8CC"/>
<path d="M1058,138.2 L1050,138.2 M1053,135.2 L1049.6,138.2 L1053,141.2" fill="none" stroke="#C8C8CC" stroke-width="1.8"/>
<path d="M1088.4,135 L1097.2,135 L1097.2,149.4 L1092.8000000000002,147.0 L1088.4,149.4 Z" fill="#C8C8CC"/>
<path d="M1080,138.2 L1088,138.2 M1085,135.2 L1088.4,138.2 L1085,141.2" fill="none" stroke="#C8C8CC" stroke-width="1.8"/>
<path d="M1120.6,136.4 L1129.3999999999999,136.4 L1129.3999999999999,151.0 L1125.0,148.6 L1120.6,151.0 Z" fill="#C8C8CC"/>
<path d="M1112.4,133.2 L1121,143.4 M1121,133.2 L1112.4,143.4" fill="none" stroke="#C8C8CC" stroke-width="1.8"/>
<path d="M146.8,188.6 L146.8,183.4 L151.6,183.4 L151.6,188.6" fill="none" stroke="#6a6a6a" stroke-width="1.3"/>
<rect x="150.2" y="183.4" width="1.9" height="5.2" fill="#6a6a6a"/>
<rect x="144.4" y="188.6" width="10.2" height="1.5" fill="#6a6a6a"/>
<rect x="148.8" y="190.1" width="1.4" height="4.4" fill="#6a6a6a"/>
<path d="M343.29999999999995,188.6 L343.29999999999995,183.4 L348.1,183.4 L348.1,188.6" fill="none" stroke="#6a6a6a" stroke-width="1.3"/>
<rect x="346.70000000000005" y="183.4" width="1.9" height="5.2" fill="#6a6a6a"/>
<rect x="340.9" y="188.6" width="10.2" height="1.5" fill="#6a6a6a"/>
<rect x="345.3" y="190.1" width="1.4" height="4.4" fill="#6a6a6a"/>
<path d="M599.9,188.6 L599.9,183.4 L604.7,183.4 L604.7,188.6" fill="none" stroke="#D6EBFA" stroke-width="1.3"/>
<rect x="603.3000000000001" y="183.4" width="1.9" height="5.2" fill="#D6EBFA"/>
<rect x="597.5" y="188.6" width="10.2" height="1.5" fill="#D6EBFA"/>
<rect x="601.9" y="190.1" width="1.4" height="4.4" fill="#D6EBFA"/>
<path d="M905.3,188.6 L905.3,183.4 L910.1,183.4 L910.1,188.6" fill="none" stroke="#6a6a6a" stroke-width="1.3"/>
<rect x="908.7" y="183.4" width="1.9" height="5.2" fill="#6a6a6a"/>
<rect x="902.9" y="188.6" width="10.2" height="1.5" fill="#6a6a6a"/>
<rect x="907.3" y="190.1" width="1.4" height="4.4" fill="#6a6a6a"/>
<path d="M625.8,182.8 L638.8,194 M638.8,182.8 L625.8,194" stroke="#D6EBFA" stroke-width="1.6"/>
<path d="M1447.6,221.8 L1457.4,221.8 L1452.5,226.4 Z" fill="#555"/>
<rect x="56" y="246.2" width="20.2" height="16.8" fill="#F8FBF8" stroke="#5E9E63" stroke-width="1.6"/>
<text x="58.4" y="259.2" font-family="Liberation Sans, sans-serif" font-weight="700" font-size="11.8" fill="#4a4a4a">C</text>
<text x="67" y="256.4" font-family="Liberation Sans, sans-serif" font-weight="700" font-size="8.8" fill="#4a4a4a" textLength="6" lengthAdjust="spacingAndGlyphs">#</text>
<path d="M503,253.6 L511.6,253.6 L507.3,257.8 Z" fill="#555"/>
<path d="M976,253.4 L984.2,253.4 L980.1,257.6 Z" fill="#555"/>
<path d="M1448,253.6 L1456.2,253.6 L1452.1,257.8 Z" fill="#555"/>
<g transform="translate(534,250.2) rotate(-38)"><rect x="-5.4" y="-3.7" width="10.8" height="7.4" rx="1.2" fill="#DC8C1C"/></g>
<g transform="translate(545.4,253.2) rotate(45)"><rect x="-2.5" y="-2.5" width="5" height="5" rx="0.6" fill="#DC8C1C"/></g>
<g transform="translate(545.2,261.2) rotate(45)"><rect x="-2.5" y="-2.5" width="5" height="5" rx="0.6" fill="#DC8C1C"/></g>
<path d="M537,252.6 L542.6,253.2 M540,253 L540,261.2 L543,261.2" fill="none" stroke="#B8781E" stroke-width="1.1"/>
<path d="M1007.9,246.8 L1014.6,250.6 L1014.6,258.2 L1007.9,262 L1001.2,258.2 L1001.2,250.6 Z" fill="#EAD9F8" stroke="#7A5DB0" stroke-width="1.5" stroke-linejoin="round"/>
<path d="M1001.6,250.8 L1007.9,254.4 L1014.2,250.8 M1007.9,254.4 L1007.9,261.6" fill="none" stroke="#7A5DB0" stroke-width="1.3"/>
<rect x="217.5" y="270" width="1.4" height="652" fill="#A5A5A5"/>
<rect x="210.7" y="306.5" width="13.8" height="13.8" fill="#fff" stroke="#ADADAD" stroke-width="1"/>
<rect x="214" y="312.59999999999997" width="8" height="1.6" fill="#555"/>
<rect x="210.7" y="363.1" width="13.8" height="13.8" fill="#fff" stroke="#ADADAD" stroke-width="1"/>
<rect x="214" y="369.2" width="8" height="1.6" fill="#555"/>
<rect x="210.7" y="502.70000000000005" width="13.8" height="13.8" fill="#fff" stroke="#ADADAD" stroke-width="1"/>
<rect x="214" y="508.8" width="8" height="1.6" fill="#555"/>
<rect x="218.5" y="466.2" width="6.6" height="1.2" fill="#A5A5A5"/>
<path d="M253.2,301 L253.2,922" stroke="#D2D2D2" stroke-width="1.2" stroke-dasharray="5.6 4.2"/>
<path d="M300.2,357 L300.2,922" stroke="#D2D2D2" stroke-width="1.2" stroke-dasharray="5.6 4.2"/>
<path d="M347.3,387 L347.3,411" stroke="#D2D2D2" stroke-width="1.2" stroke-dasharray="5.6 4.2"/>
<path d="M347.3,555 L347.3,922" stroke="#D2D2D2" stroke-width="1.2" stroke-dasharray="5.6 4.2"/>
<path d="M88.4,564.4 L99.2,574.6" stroke="#2b2b2b" stroke-width="3.6" stroke-linecap="round"/>
<path d="M78.8,563.6 L80.6,566.4 L84.6,564 L86.2,566.4 L90.8,562.4 L87.8,558.2 Q89.6,555.6 93.2,554.6 Q87.2,553.6 82.6,558 Z" fill="#2b2b2b"/>
<rect x="555" y="552" width="1.4" height="26" fill="#000"/>
<path d="M835.8,706.2 L840.8,706.2 M838.3,706.2 L838.3,717.8 M835.8,717.8 L840.8,717.8" stroke="#222" stroke-width="1.1" fill="none"/>
<path d="M1405.6,645.8 Q1417,644.2 1418.8,648 Q1418.6,652 1411.2,652.6" fill="none" stroke="#2B8CB0" stroke-width="1.8" stroke-linecap="round"/>
<path d="M1408.2,652.6 L1412.4,648.4 L1412.6,656 Z" fill="#2B8CB0"/>
<path d="M1405.6,701.8 Q1417,700.2 1418.8,704 Q1418.6,708 1411.2,708.6" fill="none" stroke="#2B8CB0" stroke-width="1.8" stroke-linecap="round"/>
<path d="M1408.2,708.6 L1412.4,704.4 L1412.6,712 Z" fill="#2B8CB0"/>
<path d="M1405.6,757.8 Q1417,756.2 1418.8,760 Q1418.6,764 1411.2,764.6" fill="none" stroke="#2B8CB0" stroke-width="1.8" stroke-linecap="round"/>
<path d="M1408.2,764.6 L1412.4,760.4 L1412.6,768 Z" fill="#2B8CB0"/>
<path d="M1405.6,813.8 Q1417,812.2 1418.8,816 Q1418.6,820 1411.2,820.6" fill="none" stroke="#2B8CB0" stroke-width="1.8" stroke-linecap="round"/>
<path d="M1408.2,820.6 L1412.4,816.4 L1412.6,824 Z" fill="#2B8CB0"/>
<path d="M1405.6,869.8 Q1417,868.2 1418.8,872 Q1418.6,876 1411.2,876.6" fill="none" stroke="#2B8CB0" stroke-width="1.8" stroke-linecap="round"/>
<path d="M1408.2,876.6 L1412.4,872.4 L1412.6,880 Z" fill="#2B8CB0"/>
<rect x="1421.5" y="271" width="40.5" height="25" fill="#F1F1F4" stroke="#D6D6DE" stroke-width="1"/>
<rect x="1433" y="282.2" width="16.8" height="1.6" fill="#1e1e1e"/>
<rect x="1433" y="285.4" width="16.8" height="1.6" fill="#1e1e1e"/>
<path d="M1441.4,276.4 L1441.4,282 M1441.4,287 L1441.4,292.8" stroke="#1e1e1e" stroke-width="1.5"/>
<path d="M1438.2,279 L1441.4,275.4 L1444.6,279 Z" fill="#1e1e1e"/>
<path d="M1438.2,290.2 L1441.4,293.8 L1444.6,290.2 Z" fill="#1e1e1e"/>
<rect x="1433" y="299.6" width="16.2" height="15.8" fill="#2D9E2D"/>
<path d="M1436.6,307.6 L1439.8,311.6 L1445.6,303" fill="none" stroke="#fff" stroke-width="2.2"/>
<path d="M1435.4,335.8 L1448,335.8 L1441.7,328.4 Z" fill="#868999"/>
<path d="M1435.8,906 L1448.4,906 L1442.1,915 Z" fill="#868999"/>
<rect x="1422.6" y="345.2" width="6" height="39.6" fill="#6AE06A"/>
<rect x="1422.6" y="396" width="6" height="265.8" fill="#6AE06A"/>
<rect x="1429.4" y="397.6" width="26.4" height="260" fill="#C3C4CB"/>
<rect x="1447.6" y="397" width="14.8" height="3.2" fill="#22A022"/>
<rect x="1421.5" y="467.2" width="41" height="3.4" fill="#0A0ACD"/>
<path d="M125.6,934.6 L133.4,934.6 L129.5,938.6 Z" fill="#555"/>
<g fill="#BDBFCB"><rect x="1627.0" y="186.2" width="1.4" height="1.4"/><rect x="1627.0" y="191.79999999999998" width="1.4" height="1.4"/><rect x="1630.0" y="189.0" width="1.4" height="1.4"/><rect x="1632.9" y="186.2" width="1.4" height="1.4"/><rect x="1632.9" y="191.79999999999998" width="1.4" height="1.4"/><rect x="1635.9" y="189.0" width="1.4" height="1.4"/><rect x="1638.8" y="186.2" width="1.4" height="1.4"/><rect x="1638.8" y="191.79999999999998" width="1.4" height="1.4"/><rect x="1641.8" y="189.0" width="1.4" height="1.4"/><rect x="1644.7" y="186.2" width="1.4" height="1.4"/><rect x="1644.7" y="191.79999999999998" width="1.4" height="1.4"/><rect x="1647.7" y="189.0" width="1.4" height="1.4"/><rect x="1650.6" y="186.2" width="1.4" height="1.4"/><rect x="1650.6" y="191.79999999999998" width="1.4" height="1.4"/><rect x="1653.6" y="189.0" width="1.4" height="1.4"/><rect x="1656.5" y="186.2" width="1.4" height="1.4"/><rect x="1656.5" y="191.79999999999998" width="1.4" height="1.4"/><rect x="1659.5" y="189.0" width="1.4" height="1.4"/><rect x="1662.4" y="186.2" width="1.4" height="1.4"/><rect x="1662.4" y="191.79999999999998" width="1.4" height="1.4"/><rect x="1665.4" y="189.0" width="1.4" height="1.4"/><rect x="1668.3" y="186.2" width="1.4" height="1.4"/><rect x="1668.3" y="191.79999999999998" width="1.4" height="1.4"/><rect x="1671.3" y="189.0" width="1.4" height="1.4"/><rect x="1674.2" y="186.2" width="1.4" height="1.4"/><rect x="1674.2" y="191.79999999999998" width="1.4" height="1.4"/><rect x="1677.2" y="189.0" width="1.4" height="1.4"/><rect x="1680.1" y="186.2" width="1.4" height="1.4"/><rect x="1680.1" y="191.79999999999998" width="1.4" height="1.4"/><rect x="1683.1" y="189.0" width="1.4" height="1.4"/><rect x="1686.0" y="186.2" width="1.4" height="1.4"/><rect x="1686.0" y="191.79999999999998" width="1.4" height="1.4"/><rect x="1689.0" y="189.0" width="1.4" height="1.4"/><rect x="1691.9" y="186.2" width="1.4" height="1.4"/><rect x="1691.9" y="191.79999999999998" width="1.4" height="1.4"/><rect x="1694.9" y="189.0" width="1.4" height="1.4"/><rect x="1697.8" y="186.2" width="1.4" height="1.4"/><rect x="1697.8" y="191.79999999999998" width="1.4" height="1.4"/><rect x="1700.8" y="189.0" width="1.4" height="1.4"/><rect x="1703.7" y="186.2" width="1.4" height="1.4"/><rect x="1703.7" y="191.79999999999998" width="1.4" height="1.4"/><rect x="1706.7" y="189.0" width="1.4" height="1.4"/><rect x="1709.6" y="186.2" width="1.4" height="1.4"/><rect x="1709.6" y="191.79999999999998" width="1.4" height="1.4"/><rect x="1712.6" y="189.0" width="1.4" height="1.4"/><rect x="1715.5" y="186.2" width="1.4" height="1.4"/><rect x="1715.5" y="191.79999999999998" width="1.4" height="1.4"/><rect x="1718.5" y="189.0" width="1.4" height="1.4"/><rect x="1721.4" y="186.2" width="1.4" height="1.4"/><rect x="1721.4" y="191.79999999999998" width="1.4" height="1.4"/><rect x="1724.4" y="189.0" width="1.4" height="1.4"/><rect x="1727.3" y="186.2" width="1.4" height="1.4"/><rect x="1727.3" y="191.79999999999998" width="1.4" height="1.4"/><rect x="1730.3" y="189.0" width="1.4" height="1.4"/><rect x="1733.2" y="186.2" width="1.4" height="1.4"/><rect x="1733.2" y="191.79999999999998" width="1.4" height="1.4"/><rect x="1736.2" y="189.0" width="1.4" height="1.4"/><rect x="1739.1" y="186.2" width="1.4" height="1.4"/><rect x="1739.1" y="191.79999999999998" width="1.4" height="1.4"/><rect x="1742.1" y="189.0" width="1.4" height="1.4"/><rect x="1745.0" y="186.2" width="1.4" height="1.4"/><rect x="1745.0" y="191.79999999999998" width="1.4" height="1.4"/><rect x="1748.0" y="189.0" width="1.4" height="1.4"/><rect x="1750.9" y="186.2" width="1.4" height="1.4"/><rect x="1750.9" y="191.79999999999998" width="1.4" height="1.4"/><rect x="1753.9" y="189.0" width="1.4" height="1.4"/><rect x="1756.8" y="186.2" width="1.4" height="1.4"/><rect x="1756.8" y="191.79999999999998" width="1.4" height="1.4"/><rect x="1759.8" y="189.0" width="1.4" height="1.4"/><rect x="1762.7" y="186.2" width="1.4" height="1.4"/><rect x="1762.7" y="191.79999999999998" width="1.4" height="1.4"/><rect x="1765.7" y="189.0" width="1.4" height="1.4"/><rect x="1768.6" y="186.2" width="1.4" height="1.4"/><rect x="1768.6" y="191.79999999999998" width="1.4" height="1.4"/><rect x="1771.6" y="189.0" width="1.4" height="1.4"/><rect x="1774.5" y="186.2" width="1.4" height="1.4"/><rect x="1774.5" y="191.79999999999998" width="1.4" height="1.4"/><rect x="1777.5" y="189.0" width="1.4" height="1.4"/><rect x="1780.4" y="186.2" width="1.4" height="1.4"/><rect x="1780.4" y="191.79999999999998" width="1.4" height="1.4"/><rect x="1783.4" y="189.0" width="1.4" height="1.4"/><rect x="1786.3" y="186.2" width="1.4" height="1.4"/><rect x="1786.3" y="191.79999999999998" width="1.4" height="1.4"/><rect x="1789.3" y="189.0" width="1.4" height="1.4"/><rect x="1792.2" y="186.2" width="1.4" height="1.4"/><rect x="1792.2" y="191.79999999999998" width="1.4" height="1.4"/><rect x="1795.2" y="189.0" width="1.4" height="1.4"/><rect x="1798.1" y="186.2" width="1.4" height="1.4"/><rect x="1798.1" y="191.79999999999998" width="1.4" height="1.4"/><rect x="1801.1" y="189.0" width="1.4" height="1.4"/><rect x="1804.0" y="186.2" width="1.4" height="1.4"/><rect x="1804.0" y="191.79999999999998" width="1.4" height="1.4"/><rect x="1807.0" y="189.0" width="1.4" height="1.4"/><rect x="1809.9" y="186.2" width="1.4" height="1.4"/><rect x="1809.9" y="191.79999999999998" width="1.4" height="1.4"/><rect x="1812.9" y="189.0" width="1.4" height="1.4"/><rect x="1815.8" y="186.2" width="1.4" height="1.4"/><rect x="1815.8" y="191.79999999999998" width="1.4" height="1.4"/><rect x="1818.8" y="189.0" width="1.4" height="1.4"/><rect x="1821.7" y="186.2" width="1.4" height="1.4"/><rect x="1821.7" y="191.79999999999998" width="1.4" height="1.4"/></g>
<path d="M1836,186.2 L1847.8,186.2 L1841.9,191.8 Z" fill="#1e1e1e"/>
<path d="M1863.6,190 L1863.6,183 L1869.4,183 L1869.4,190" fill="none" stroke="#1e1e1e" stroke-width="1.5"/>
<rect x="1867.6" y="183" width="2.6" height="7" fill="#1e1e1e"/>
<rect x="1861.2" y="190" width="11" height="1.7" fill="#1e1e1e"/>
<rect x="1865.9" y="191.6" width="1.6" height="6.2" fill="#1e1e1e"/>
<path d="M1886.6,184.2 L1899,195.2 M1899,184.2 L1886.6,195.2" stroke="#1e1e1e" stroke-width="2"/>
<circle cx="1495.2" cy="227.1" r="8.1" fill="#C9C9CC"/>
<circle cx="1527.5" cy="227.1" r="8.1" fill="#C9C9CC"/>
<path d="M1500,227.1 L1491.6,227.1 M1494.8,223.2 L1490.8,227.1 L1494.8,231" fill="none" stroke="#EDEDF0" stroke-width="2.2"/>
<path d="M1522.6,227.1 L1531,227.1 M1527.8,223.2 L1531.8,227.1 L1527.8,231" fill="none" stroke="#EDEDF0" stroke-width="2.2"/>
<path d="M1550.6,227 L1560,217.4 L1569.6,227 M1553.2,225.4 L1553.2,236.6 L1567,236.6 L1567,225.4 M1565,221.4 L1565,216.6" fill="none" stroke="#424242" stroke-width="1.8"/>
<rect x="1558" y="229.4" width="4.2" height="7" fill="#424242"/>
<path d="M1592,218 L1597.6,218 L1597.6,215.8 L1604.6,215.8 L1604.6,228.2 L1592,228.2 Z" fill="#DCB67A"/>
<rect x="1584" y="223.6" width="12" height="10.2" fill="#EEEEF2" stroke="#424242" stroke-width="1.6"/>
<rect x="1583.2" y="222.8" width="13.6" height="3" fill="#424242"/>
<path d="M1585.2,220.6 L1585.2,218.4 L1588.6,218.4" fill="none" stroke="#00539C" stroke-width="1.5"/><path d="M1588,215.8 L1590.8,218.4 L1588,221 Z" fill="#00539C"/>
<path d="M1603.4,230.2 L1603.4,232.6 L1600.4,232.6" fill="none" stroke="#00539C" stroke-width="1.5"/><path d="M1601,230 L1598.2,232.6 L1601,235.2 Z" fill="#00539C"/>
<path d="M1614.4,224.8 L1623.2,224.8 L1618.8000000000002,229.2 Z" fill="#616161"/>
<rect x="1632" y="211.5" width="1" height="28" fill="#CCCEDB"/>
<rect x="1792" y="211.5" width="1" height="28" fill="#CCCEDB"/>
<circle cx="1659" cy="228.4" r="6.3" fill="none" stroke="#424242" stroke-width="1.6"/>
<path d="M1659,224.6 L1659,228.8 L1662.4,228.8" fill="none" stroke="#424242" stroke-width="1.3"/>
<path d="M1646.8,215.4 L1653.6,215.4 L1650.8,218.6 L1650.8,221.4 L1649.6,221.4 L1649.6,218.6 Z" fill="#424242"/>
<path d="M1676.6,224.8 L1685,224.8 L1680.8,229.2 Z" fill="#616161"/>
<path d="M1713.1,228.6 A7.5,7.5 0 1 1 1705.6,221.1" fill="none" stroke="#00539C" stroke-width="2.7"/>
<path d="M1705.4,216.4 L1705.4,225.4 L1711.3,220.9 Z" fill="#00539C"/>
<path d="M1736.4,220.4 L1736.4,218 L1746.6,218 L1746.6,227.4 L1744.4,227.4 M1733.4,223.4 L1733.4,221 L1743.6,221 L1743.6,230.4 L1741.4,230.4" fill="none" stroke="#555" stroke-width="1.4"/>
<rect x="1730.6" y="224.2" width="10.2" height="9.6" fill="#EEEEF2" stroke="#424242" stroke-width="1.5"/>
<rect x="1733.2" y="228.2" width="5" height="1.6" fill="#666"/>
<path d="M1763.4,229.8 L1760.2,229.8 L1760.2,217 L1768.4,217 M1772,221 L1772,217 L1776.8,217 L1780.4,220.6 L1780.4,231.4 L1778.4,231.4" fill="none" stroke="#666" stroke-width="1.4"/>
<path d="M1765.4,222.6 L1772.8,222.6 L1776.4,226.2 L1776.4,237.2 L1765.4,237.2 Z" fill="#EEEEF2" stroke="#424242" stroke-width="1.5"/>
<rect x="1767.8" y="228" width="6.2" height="1.3" fill="#424242"/>
<rect x="1767.8" y="230.8" width="6.2" height="1.3" fill="#424242"/>
<rect x="1767.8" y="233.6" width="6.2" height="1.3" fill="#424242"/>
<path d="M1812.2,221.4 L1806.6,226.5 L1812.2,231.6 M1817,221.4 L1822.6,226.5 L1817,231.6" fill="none" stroke="#333" stroke-width="2"/>
<g transform="translate(1836,216.2) scale(1.0)"><path d="M2.2,19.2 L11.4,10" stroke="#3b3b3b" stroke-width="4" stroke-linecap="round"/><path d="M17.6,0.6 A6.4,6.4 0 1 0 21,8.4 L16.6,9.4 L13,6.6 L13.4,2.6 Z" fill="#3b3b3b"/></g>
<rect x="1878.2" y="223.8" width="11.6" height="6" fill="#3B3B3F"/>
<rect x="1868.7" y="228.4" width="10" height="1.5" fill="#4a4a4a"/>
<circle cx="1881.2" cy="260.4" r="5" fill="none" stroke="#555" stroke-width="2.0"/>
<path d="M1877.3,264.3 L1870,271.6" stroke="#555" stroke-width="3.0" stroke-linecap="butt"/>
<path d="M1896,262 L1905,262 L1900.5,266.2 Z" fill="#616161"/>
<path d="M1490.2,294.4 L1490.2,307.6 L1497.4,301.0 Z" fill="none" stroke="#2b2b2b" stroke-width="1.5" stroke-linejoin="miter"/>
<path d="M1521.4,295.4 L1531.8000000000002,295.4 L1533.4,293.0 L1542.0,293.0 L1542.0,309.0 L1521.4,309.0 Z" fill="#DCB67A"/>
<rect x="1534.0" y="294.4" width="7" height="1.2" fill="#EFD9B0"/>
<path d="M1499,323.97999999999996 L1499,332.97999999999996 L1490,332.97999999999996 Z" fill="#1e1e1e"/>
<path d="M1525.0,330.58 L1525.0,323.18 L1532.4,323.18 L1534.0,320.97999999999996 L1541.0,320.97999999999996 L1541.0,335.97999999999996 L1537.4,335.97999999999996" fill="#F6EDDC" stroke="#DCB67A" stroke-width="1.3"/>
<path d="M1520.6000000000001,336.78 L1524.0,328.78 L1535.8000000000002,328.78 L1539.2,336.78 Z" fill="#DCB67A"/>
<path d="M1526.2,351.55999999999995 L1526.2,360.55999999999995 L1517.2,360.55999999999995 Z" fill="#1e1e1e"/>
<path d="M1537,356.76 L1539.4,360.35999999999996 L1544,351.55999999999995" fill="none" stroke="#E51400" stroke-width="1.9"/>
<rect x="1547.6" y="347.55999999999995" width="20" height="17" fill="#F8FBF8" stroke="#4A9A53" stroke-width="1.6"/>
<text x="1550.4" y="360.35999999999996" font-family="Liberation Sans, sans-serif" font-weight="700" font-size="11.6" fill="#3b3b3b">C</text>
<text x="1558.9840000000002" y="357.56" font-family="Liberation Sans, sans-serif" font-weight="700" font-size="8.6" fill="#3b3b3b" textLength="5.8" lengthAdjust="spacingAndGlyphs">#</text>
<path d="M1544.2,377.14 L1544.2,390.34000000000003 L1551.4,383.74 Z" fill="none" stroke="#2b2b2b" stroke-width="1.5" stroke-linejoin="miter"/>
<path d="M1565.6000000000001,383.94 L1565.6000000000001,381.94 Q1567.6000000000001,378.74 1569.6000000000001,381.94 L1569.6000000000001,383.94" fill="none" stroke="#1BA1E2" stroke-width="1.4"/>
<rect x="1563.4" y="383.74" width="8.4" height="6" fill="#1BA1E2"/>
<rect x="1566.6000000000001" y="385.54" width="2" height="2.2" fill="#E6F4FC"/>
<g transform="translate(1574.2,373.14) scale(0.98)"><path d="M2.2,19.2 L11.4,10" stroke="#3b3b3b" stroke-width="4" stroke-linecap="round"/><path d="M17.6,0.6 A6.4,6.4 0 1 0 21,8.4 L16.6,9.4 L13,6.6 L13.4,2.6 Z" fill="#3b3b3b"/></g>
<path d="M1544.4,404.71999999999997 L1544.4,417.92 L1551.6000000000001,411.32 Z" fill="none" stroke="#2b2b2b" stroke-width="1.5" stroke-linejoin="miter"/>
<rect x="1574.2" y="407.92" width="6" height="6.8" fill="#3b3b3b"/><rect x="1580" y="410.52" width="7" height="1.6" fill="#3b3b3b"/><rect x="1586.6" y="406.32" width="9" height="10" fill="#3b3b3b"/>
<path d="M1553,434.29999999999995 L1553,443.29999999999995 L1544,443.29999999999995 Z" fill="#1e1e1e"/>
<path d="M1579.1999999999998,440.9 L1579.1999999999998,433.5 L1586.6,433.5 L1588.1999999999998,431.29999999999995 L1595.1999999999998,431.29999999999995 L1595.1999999999998,446.29999999999995 L1591.6,446.29999999999995" fill="#F6EDDC" stroke="#DCB67A" stroke-width="1.3"/>
<path d="M1574.8,447.09999999999997 L1578.1999999999998,439.09999999999997 L1590.0,439.09999999999997 L1593.3999999999999,447.09999999999997 Z" fill="#DCB67A"/>
<path d="M1571.2,459.88 L1571.2,473.08000000000004 L1578.4,466.48 Z" fill="none" stroke="#2b2b2b" stroke-width="1.5" stroke-linejoin="miter"/>
<path d="M1590.6,466.48 L1598.1999999999998,466.48 M1594.3999999999999,462.68 L1594.3999999999999,470.28000000000003" stroke="#3F9C35" stroke-width="1.7"/>
<text x="1603.8" y="470.88" font-family="Liberation Sans, sans-serif" font-weight="700" font-size="12.8" fill="#3F9C35">C</text>
<text x="1613.272" y="468.08000000000004" font-family="Liberation Sans, sans-serif" font-weight="700" font-size="9.4" fill="#3F9C35" textLength="6.4" lengthAdjust="spacingAndGlyphs">#</text>
<path d="M1571.2,487.46 L1571.2,500.66 L1578.4,494.06 Z" fill="none" stroke="#2b2b2b" stroke-width="1.5" stroke-linejoin="miter"/>
<path d="M1590.6,494.06 L1598.1999999999998,494.06 M1594.3999999999999,490.26 L1594.3999999999999,497.86" stroke="#3F9C35" stroke-width="1.7"/>
<text x="1603.8" y="498.46" font-family="Liberation Sans, sans-serif" font-weight="700" font-size="12.8" fill="#3F9C35">C</text>
<text x="1613.272" y="495.66" font-family="Liberation Sans, sans-serif" font-weight="700" font-size="9.4" fill="#3F9C35" textLength="6.4" lengthAdjust="spacingAndGlyphs">#</text>
<path d="M1553,517.04 L1553,526.04 L1544,526.04 Z" fill="#1e1e1e"/>
<path d="M1579.1999999999998,523.64 L1579.1999999999998,516.24 L1586.6,516.24 L1588.1999999999998,514.04 L1595.1999999999998,514.04 L1595.1999999999998,529.04 L1591.6,529.04" fill="#F6EDDC" stroke="#DCB67A" stroke-width="1.3"/>
<path d="M1574.8,529.84 L1578.1999999999998,521.84 L1590.0,521.84 L1593.3999999999999,529.84 Z" fill="#DCB67A"/>
<path d="M1571.2,542.6199999999999 L1571.2,555.8199999999999 L1578.4,549.2199999999999 Z" fill="none" stroke="#2b2b2b" stroke-width="1.5" stroke-linejoin="miter"/>
<path d="M1590.6,549.2199999999999 L1598.1999999999998,549.2199999999999 M1594.3999999999999,545.42 L1594.3999999999999,553.0199999999999" stroke="#3F9C35" stroke-width="1.7"/>
<text x="1603.8" y="553.6199999999999" font-family="Liberation Sans, sans-serif" font-weight="700" font-size="12.8" fill="#3F9C35">C</text>
<text x="1613.272" y="550.8199999999999" font-family="Liberation Sans, sans-serif" font-weight="700" font-size="9.4" fill="#3F9C35" textLength="6.4" lengthAdjust="spacingAndGlyphs">#</text>
<path d="M1571.2,570.1999999999999 L1571.2,583.4 L1578.4,576.8 Z" fill="none" stroke="#2b2b2b" stroke-width="1.5" stroke-linejoin="miter"/>
<path d="M1590.6,576.8 L1598.1999999999998,576.8 M1594.3999999999999,573.0 L1594.3999999999999,580.5999999999999" stroke="#3F9C35" stroke-width="1.7"/>
<text x="1603.8" y="581.1999999999999" font-family="Liberation Sans, sans-serif" font-weight="700" font-size="12.8" fill="#3F9C35">C</text>
<text x="1613.272" y="578.4" font-family="Liberation Sans, sans-serif" font-weight="700" font-size="9.4" fill="#3F9C35" textLength="6.4" lengthAdjust="spacingAndGlyphs">#</text>
<path d="M1575.4,598.78 L1585.8000000000002,598.78 L1587.4,596.38 L1596.0,596.38 L1596.0,612.38 L1575.4,612.38 Z" fill="#DCB67A"/>
<rect x="1588.0" y="597.78" width="7" height="1.2" fill="#EFD9B0"/>
<path d="M1575.4,626.3599999999999 L1585.8000000000002,626.3599999999999 L1587.4,623.9599999999999 L1596.0,623.9599999999999 L1596.0,639.9599999999999 L1575.4,639.9599999999999 Z" fill="#DCB67A"/>
<rect x="1588.0" y="625.3599999999999" width="7" height="1.2" fill="#EFD9B0"/>
<path d="M1575.4,653.9399999999999 L1585.8000000000002,653.9399999999999 L1587.4,651.54 L1596.0,651.54 L1596.0,667.54 L1575.4,667.54 Z" fill="#DCB67A"/>
<rect x="1588.0" y="652.9399999999999" width="7" height="1.2" fill="#EFD9B0"/>
<path d="M1575.4,681.52 L1585.8000000000002,681.52 L1587.4,679.12 L1596.0,679.12 L1596.0,695.12 L1575.4,695.12 Z" fill="#DCB67A"/>
<rect x="1588.0" y="680.52" width="7" height="1.2" fill="#EFD9B0"/>
<path d="M1575.4,709.0999999999999 L1585.8000000000002,709.0999999999999 L1587.4,706.6999999999999 L1596.0,706.6999999999999 L1596.0,722.6999999999999 L1575.4,722.6999999999999 Z" fill="#DCB67A"/>
<rect x="1588.0" y="708.0999999999999" width="7" height="1.2" fill="#EFD9B0"/>
<path d="M1575.4,736.68 L1585.8000000000002,736.68 L1587.4,734.28 L1596.0,734.28 L1596.0,750.28 L1575.4,750.28 Z" fill="#DCB67A"/>
<rect x="1588.0" y="735.68" width="7" height="1.2" fill="#EFD9B0"/>
<path d="M1575.4,764.26 L1585.8000000000002,764.26 L1587.4,761.86 L1596.0,761.86 L1596.0,777.86 L1575.4,777.86 Z" fill="#DCB67A"/>
<rect x="1588.0" y="763.26" width="7" height="1.2" fill="#EFD9B0"/>
<path d="M1575.4,791.8399999999999 L1585.8000000000002,791.8399999999999 L1587.4,789.4399999999999 L1596.0,789.4399999999999 L1596.0,805.4399999999999 L1575.4,805.4399999999999 Z" fill="#DCB67A"/>
<rect x="1588.0" y="790.8399999999999" width="7" height="1.2" fill="#EFD9B0"/>
<path d="M1565.6000000000001,825.2199999999999 L1565.6000000000001,823.2199999999999 Q1567.6000000000001,820.02 1569.6000000000001,823.2199999999999 L1569.6000000000001,825.2199999999999" fill="none" stroke="#1BA1E2" stroke-width="1.4"/>
<rect x="1563.4" y="825.02" width="8.4" height="6" fill="#1BA1E2"/>
<rect x="1566.6000000000001" y="826.8199999999999" width="2" height="2.2" fill="#E6F4FC"/>
<path d="M1581.6,823.02 L1581.6,815.8199999999999 L1590.4,815.8199999999999 L1594.8,820.22 L1594.8,832.02 L1584,832.02" fill="#F8F8FA" stroke="#3b3b3b" stroke-width="1.5"/>
<path d="M1590,815.42 L1595.2,820.62 L1590,820.62 Z" fill="#3b3b3b"/>
<path d="M1575.6,821.42 L1575.6,825.62 Q1578.8,828.02 1582,825.62 L1582,821.42 L1580,821.42 L1580,824.42 L1577.6,824.42 L1577.6,821.42 Z" fill="#2b2b2b"/>
<rect x="1577.7" y="826.42" width="2.2" height="8.6" fill="#2b2b2b"/>
<path d="M1544.4,845.9999999999999 L1544.4,859.1999999999999 L1551.6000000000001,852.5999999999999 Z" fill="none" stroke="#2b2b2b" stroke-width="1.5" stroke-linejoin="miter"/>
<path d="M1563.6,852.5999999999999 L1571.1999999999998,852.5999999999999 M1567.3999999999999,848.8 L1567.3999999999999,856.3999999999999" stroke="#3F9C35" stroke-width="1.7"/>
<text x="1576.8" y="856.9999999999999" font-family="Liberation Sans, sans-serif" font-weight="700" font-size="12.8" fill="#3F9C35">C</text>
<text x="1586.272" y="854.1999999999999" font-family="Liberation Sans, sans-serif" font-weight="700" font-size="9.4" fill="#3F9C35" textLength="6.4" lengthAdjust="spacingAndGlyphs">#</text>
<path d="M1544.4,873.5799999999999 L1544.4,886.78 L1551.6000000000001,880.18 Z" fill="none" stroke="#2b2b2b" stroke-width="1.5" stroke-linejoin="miter"/>
<path d="M1563.6,880.18 L1571.1999999999998,880.18 M1567.3999999999999,876.38 L1567.3999999999999,883.9799999999999" stroke="#3F9C35" stroke-width="1.7"/>
<text x="1576.8" y="884.5799999999999" font-family="Liberation Sans, sans-serif" font-weight="700" font-size="12.8" fill="#3F9C35">C</text>
<text x="1586.272" y="881.78" font-family="Liberation Sans, sans-serif" font-weight="700" font-size="9.4" fill="#3F9C35" textLength="6.4" lengthAdjust="spacingAndGlyphs">#</text>
<path d="M1891.4,303 L1904.8,303 L1898.1,295.6 Z" fill="#868999"/>
<path d="M1891,879 L1904.6,879 L1897.8,886.2 Z" fill="#868999"/>
<rect x="1892.4" y="330.6" width="11.8" height="422.6" fill="#C3C4CB"/>
<rect x="1498.6" y="900.6" width="355.8" height="12.2" fill="#C3C4CB"/>
<path d="M1491.4,900.6 L1491.4,913.2 L1483.2,906.9 Z" fill="#868999"/>
<path d="M1869.8,900.6 L1869.8,913.2 L1877.4,906.9 Z" fill="#868999"/>
<rect x="1886" y="897" width="25" height="22" fill="#EEEEF2"/>
<path d="M11.8,1007.4 L29,1007.4 L24.8,1023 L6.8,1023 Z" fill="none" stroke="#DDEEFA" stroke-width="1.6"/>
<path d="M1270.8,1022.6 L1270.8,1009.6 M1265.2,1015.4 L1270.8,1009.2 L1276.4,1015.4" fill="none" stroke="#ECECEC" stroke-width="2.3"/>
<path d="M1339,1020.4 L1352.4,1008" stroke="#E8E8E8" stroke-width="4.6"/>
<path d="M1348.4,1010 L1351.4,1013.2" stroke="#007ACC" stroke-width="1"/>
<g transform="translate(1419.7,1014.7) rotate(45)"><rect x="-7.2" y="-7.2" width="14.4" height="14.4" rx="1.4" fill="#E9E6DF"/></g>
<path d="M1415.6,1010.6 L1420.4,1015.4 L1420.4,1020.6 M1420.4,1015.4 L1423.4,1013" fill="none" stroke="#2C7AC0" stroke-width="1.3"/>
<circle cx="1420.4" cy="1019.8" r="1.4" fill="#2C7AC0"/><circle cx="1423.6" cy="1013.6" r="1.3" fill="#2C7AC0"/>
<path d="M1522.6,1022.4 L1522.6,1015.4 L1515.4,1008.2 M1522.6,1015.4 L1529.8,1008.2" fill="none" stroke="#E9E6DF" stroke-width="2.5"/>
<path d="M1512.2,1005.4 L1519,1006.4 L1513.2,1012.2 Z M1533,1005.4 L1526.2,1006.4 L1532,1012.2 Z" fill="#E9E6DF"/>
<path d="M1761.6,1018 L1773.4,1018 L1767.5,1012.2 Z" fill="#fff"/>
<path d="M1815.4,1012.6 L1828.8,1012.6 L1825.8,1023 L1815.4,1023 L1811.8,1026 L1812.8,1022 Z" fill="#3a3a3a" stroke="#F4F4F4" stroke-width="1.3" stroke-linejoin="round"/>
<path d="M1824.4,1003.8 L1821.4,1013.6" stroke="#F7941D" stroke-width="3.6"/>
<path d="M1820.9,1015.4 L1820.1,1018.2" stroke="#F7941D" stroke-width="3.6"/>
<circle cx="1855.8" cy="1015.2" r="10.2" fill="#F4F4F4" stroke="#CFE4F4" stroke-width="1.2"/>
<circle cx="1855.8" cy="1015.2" r="8.6" fill="#fff" stroke="#222" stroke-width="1.5"/>
<path d="M1855.8,1009.6 L1855.8,1018.6 M1851.4,1015 L1855.8,1019.6 L1860.2,1015" fill="none" stroke="#111" stroke-width="2.4"/>
<circle cx="1903.6" cy="1014.2" r="13.6" fill="#2E9E2E" stroke="#BFE8C8" stroke-width="1.4"/>
<path d="M1896.6,1014 L1901.4,1021 L1910.4,1006.4" fill="none" stroke="#fff" stroke-width="3.2"/></svg>
</div></body></html>
